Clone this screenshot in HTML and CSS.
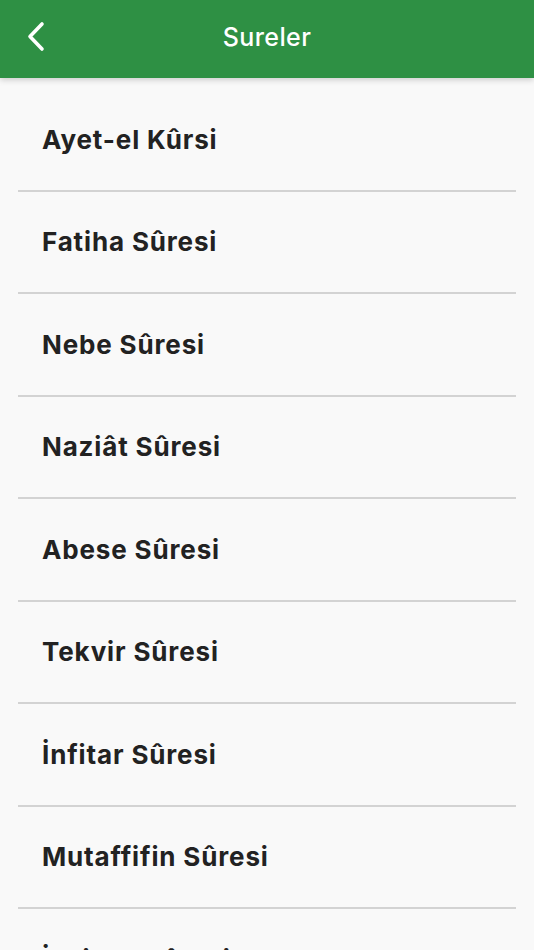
FILE: index.html
```html
<!DOCTYPE html>
<html lang="tr">
<head>
<meta charset="utf-8">
<title>Sureler</title>
<link rel="stylesheet" href="styles.css">
</head>
<body>
<header class="topbar">
  <button class="back" aria-label="Geri">
    <svg width="20" height="32" viewBox="0 0 20 32"><path d="M16 3 L4 15.5 L16 28" fill="none" stroke="#fff" stroke-width="3.6" stroke-linecap="round" stroke-linejoin="round"/></svg>
  </button>
  <h1 class="title">Sureler</h1>
</header>
<ul class="list">
  <li class="item">Ayet-el Kûrsi</li>
  <li class="item">Fatiha Sûresi</li>
  <li class="item">Nebe Sûresi</li>
  <li class="item">Naziât Sûresi</li>
  <li class="item">Abese Sûresi</li>
  <li class="item">Tekvir Sûresi</li>
  <li class="item">İnfitar Sûresi</li>
  <li class="item">Mutaffifin Sûresi</li>
  <li class="item">İnşikak Sûresi</li>
</ul>
</body>
</html>
```
FILE: styles.css
```css
html, body {
  margin: 0;
  padding: 0;
  background: #f9f9f9;
  font-family: Inter, "Noto Sans", "Liberation Sans", sans-serif;
  height: 950px;
  overflow: hidden;
}
.topbar {
  height: 78px;
  box-sizing: border-box;
  padding-bottom: 5px;
  background: #2e9044;
  display: flex;
  align-items: center;
  justify-content: center;
  position: relative;
  box-shadow: 0 2px 6px rgba(0,0,0,0.18);
  z-index: 1;
}
.back {
  position: absolute;
  left: 26px;
  top: 21px;
  border: 0;
  background: none;
  padding: 0;
  width: 20px;
  height: 32px;
}
.back svg { display: block; }
.title {
  margin: 0;
  color: #fff;
  font-size: 25px;
  font-weight: 500;
  letter-spacing: 0.4px;
}
.list {
  list-style: none;
  margin: 0;
  padding: 11px 0 0;
}
.item {
  margin: 0 18px;
  height: 100.5px;
  border-bottom: 2px solid #d3d3d3;
  display: flex;
  align-items: center;
  padding-left: 24px;
  font-size: 26px;
  font-weight: 700;
  color: #222;
  letter-spacing: 0.85px;
}
```
